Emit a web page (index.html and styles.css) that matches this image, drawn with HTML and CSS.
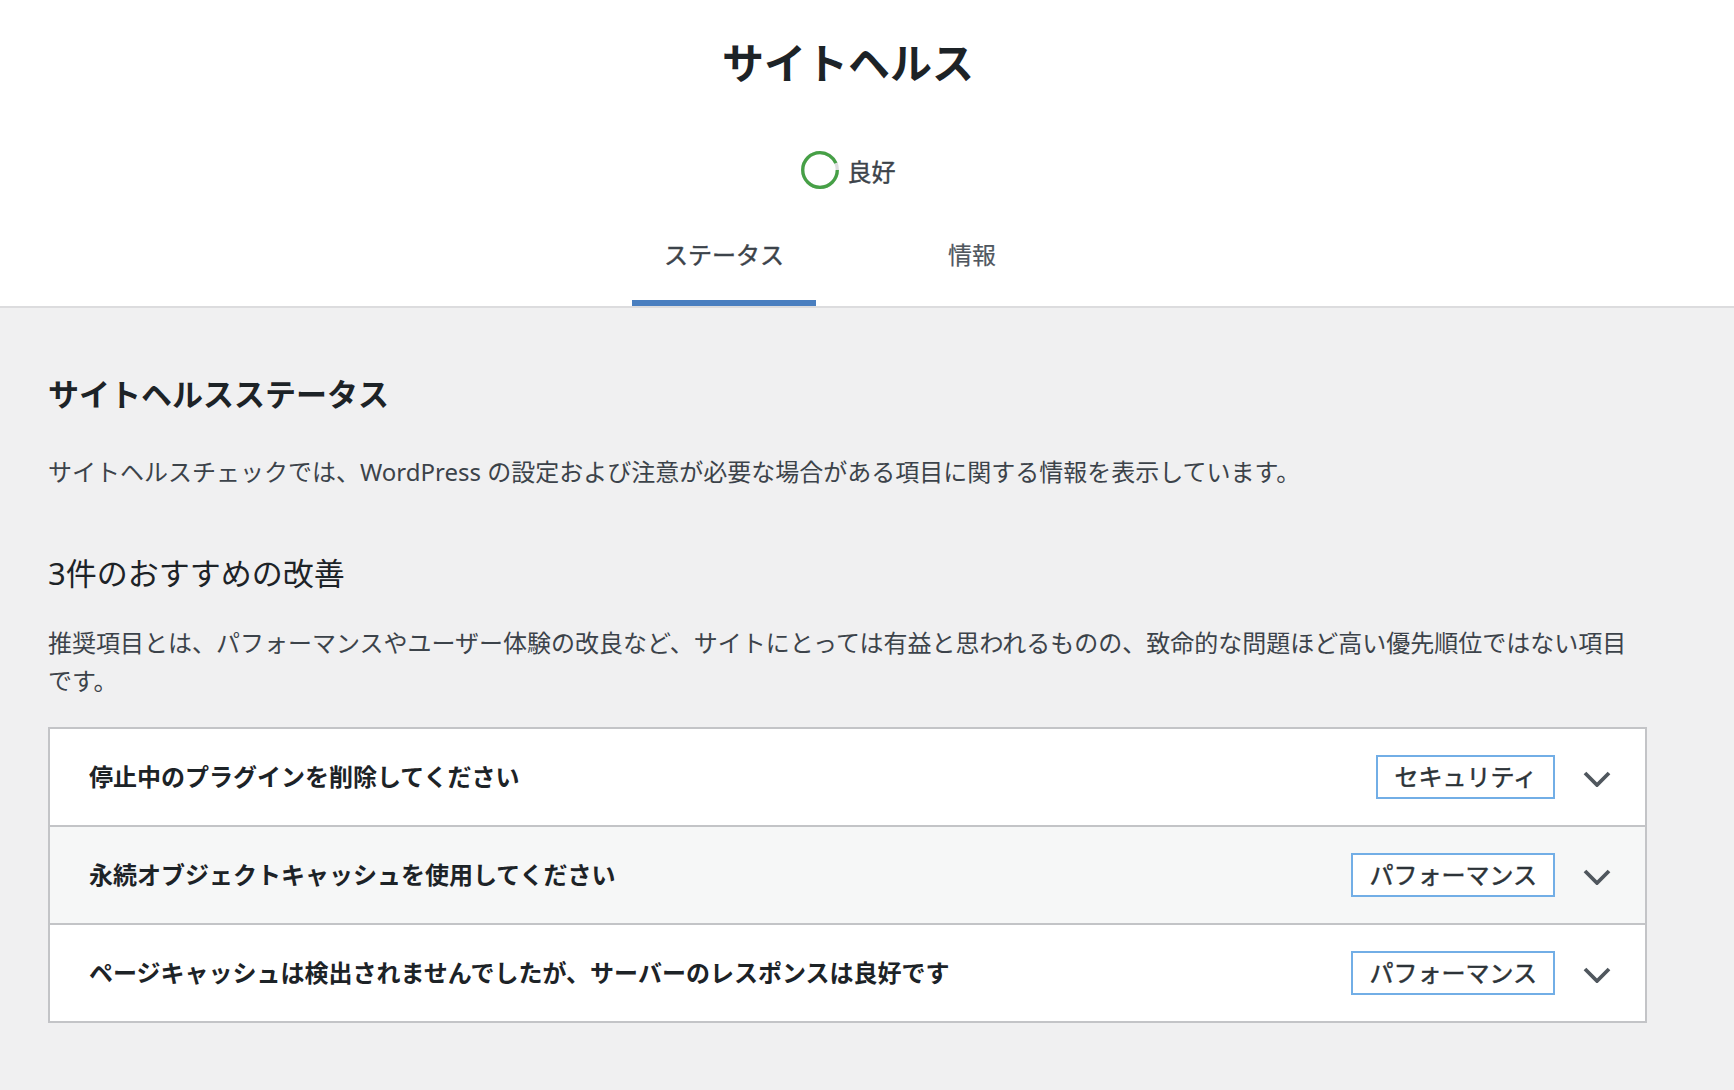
FILE: index.html
```html
<!DOCTYPE html>
<html lang="ja">
<head>
  <meta charset="UTF-8" />
  <meta name="viewport" content="width=device-width, initial-scale=1.0"/>
  <title>サイトヘルス</title>
  <link rel="stylesheet" href="styles.css">
</head>
<body>
  <header class="health-header">
    <div class="health-header-inner">
      <h1 class="health-title">サイトヘルス</h1>
      <div class="health-progress">
        <svg class="progress-circle" width="38" height="38" viewBox="0 0 38 38">
          <circle cx="19" cy="19" r="17.3" fill="none" stroke="#dcdcde" stroke-width="3.3"/>
          <circle cx="19" cy="19" r="17.3" fill="none" stroke="#46a046" stroke-width="3.3" stroke-dasharray="101 8"/>
        </svg>
        <span class="progress-label">良好</span>
      </div>
      <nav class="health-tabs">
        <a class="health-tab active" href="#">ステータス</a>
        <a class="health-tab" href="#">情報</a>
      </nav>
    </div>
  </header>

  <main class="health-body">
    <h2>サイトヘルスステータス</h2>
    <p class="intro">サイトヘルスチェックでは、WordPress の設定および注意が必要な場合がある項目に関する情報を表示しています。</p>

    <h3>3件のおすすめの改善</h3>
    <p class="intro">推奨項目とは、パフォーマンスやユーザー体験の改良など、サイトにとっては有益と思われるものの、致命的な問題ほど高い優先順位ではない項目です。</p>

    <div class="accordion">
      <div class="accordion-row">
        <span class="row-title">停止中のプラグインを削除してください</span>
        <span class="badge">セキュリティ</span>
        <svg class="chevron" width="28" height="16" viewBox="0 0 28 16"><polyline points="2,2 14,14 26,2" fill="none" stroke="#50575e" stroke-width="3.8"/></svg>
      </div>
      <div class="accordion-row hover">
        <span class="row-title">永続オブジェクトキャッシュを使用してください</span>
        <span class="badge">パフォーマンス</span>
        <svg class="chevron" width="28" height="16" viewBox="0 0 28 16"><polyline points="2,2 14,14 26,2" fill="none" stroke="#50575e" stroke-width="3.8"/></svg>
      </div>
      <div class="accordion-row">
        <span class="row-title">ページキャッシュは検出されませんでしたが、サーバーのレスポンスは良好です</span>
        <span class="badge">パフォーマンス</span>
        <svg class="chevron" width="28" height="16" viewBox="0 0 28 16"><polyline points="2,2 14,14 26,2" fill="none" stroke="#50575e" stroke-width="3.8"/></svg>
      </div>
    </div>
  </main>
</body>
</html>
```

FILE: styles.css
```css
body {
  font-family: "Noto Sans", "Noto Sans CJK JP", sans-serif;
  margin: 0;
  padding: 0;
  background: #f0f0f1;
  color: #3c434a;
}
.health-header {
  background: #fff;
  border-bottom: 2px solid #dcdcde;
  padding-right: 38px;
}
.health-header-inner {
  display: flex;
  flex-direction: column;
  align-items: center;
}
.health-title {
  margin: 0;
  padding-top: 38px;
  font-size: 42px;
  line-height: 49px;
  font-weight: 600;
  color: #1d2327;
}
.health-progress {
  margin-top: 64px;
  height: 38px;
  display: flex;
  align-items: center;
  gap: 9px;
}
.progress-circle {
  display: block;
}
.progress-label {
  font-size: 24px;
  color: #3c434a;
  -webkit-text-stroke: 0.4px #3c434a;
}
.health-tabs {
  margin-top: 21px;
  display: grid;
  grid-template-columns: 1fr 1fr;
}
.health-tab {
  display: block;
  margin: 0 32px;
  padding: 27px 32px;
  font-size: 24px;
  line-height: 36px;
  text-align: center;
  color: #50575e;
  text-decoration: none;
  border-bottom: 6px solid transparent;
  -webkit-text-stroke: 0.2px #50575e;
}
.health-tab.active {
  border-bottom-color: #4a7fc0;
  color: #3c434a;
  -webkit-text-stroke: 0.45px #3c434a;
}
.health-body {
  padding: 66px 87px 40px 48px;
}
h2 {
  margin: 0;
  font-size: 31px;
  line-height: 40px;
  font-weight: 600;
  color: #1d2327;
}
h3 {
  margin: 62px 0 0;
  font-size: 31px;
  line-height: 40px;
  font-weight: 400;
  color: #1d2327;
}
.intro {
  margin: 39px 0 0;
  font-size: 24px;
  line-height: 38px;
}
h3 + .intro {
  margin-top: 31px;
}
.accordion {
  margin-top: 27px;
  border: 2px solid #c3c4c7;
  background: #fff;
}
.accordion-row {
  display: flex;
  align-items: center;
  padding: 26px 34px 26px 39px;
  border-top: 2px solid #c3c4c7;
}
.accordion-row:first-child {
  border-top: none;
}
.accordion-row.hover {
  background: #f6f7f7;
}
.row-title {
  flex: 1;
  font-size: 24px;
  line-height: 36px;
  font-weight: 600;
  color: #1d2327;
}
.badge {
  border: 2px solid #72aee6;
  background: #fff;
  padding: 2px 16px;
  font-size: 24px;
  line-height: 36px;
  color: #2c3338;
  -webkit-text-stroke: 0.5px #2c3338;
}
.chevron {
  display: block;
  margin-left: 28px;
  margin-top: 4px;
}
```
